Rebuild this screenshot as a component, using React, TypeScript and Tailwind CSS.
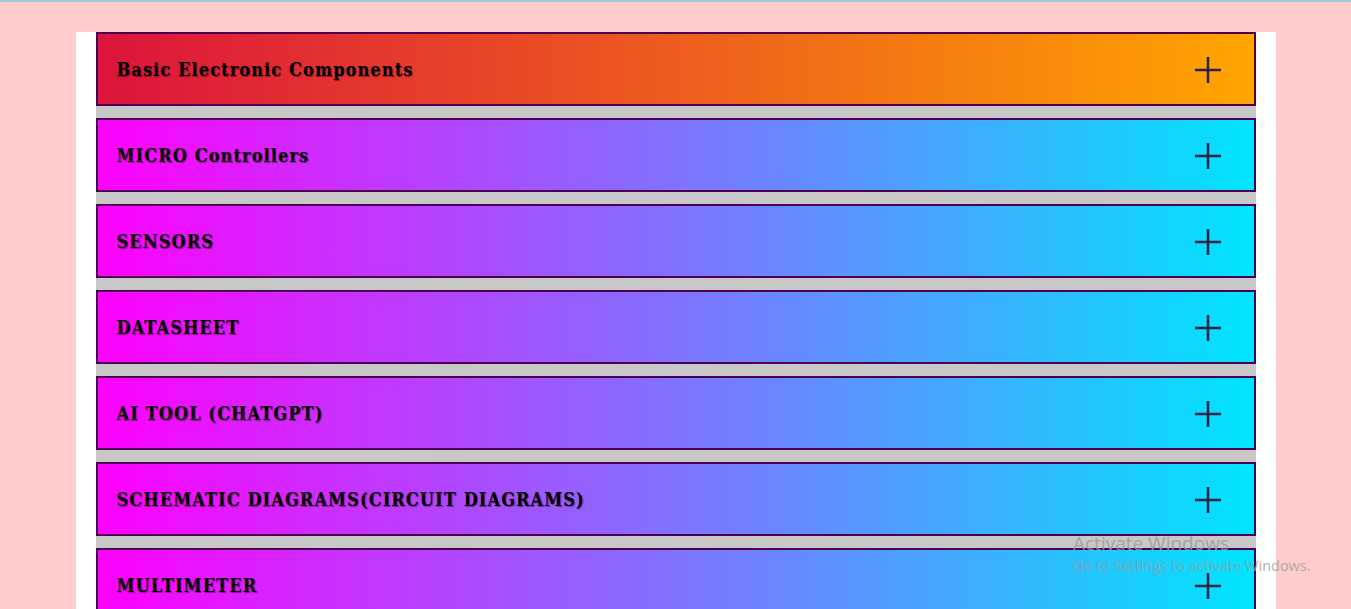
const topics = [
  "Basic Electronic Components",
  "MICRO Controllers",
  "SENSORS",
  "DATASHEET",
  "AI TOOL (CHATGPT)",
  "SCHEMATIC DIAGRAMS(CIRCUIT DIAGRAMS)",
  "MULTIMETER",
  "SOLDERING",
];

function Plus() {
  return (
    <svg width="28" height="28" viewBox="0 0 28 28" className="shrink-0">
      <path d="M14 1v26M1 14h26" stroke="#2a2145" strokeWidth="2.5" />
    </svg>
  );
}

export default function App() {
  return (
    <div className="relative min-h-screen bg-[#ffcccc] border-t-2 border-[#9ccfd8]">
      <div className="mx-auto mt-[30px] w-[1200px] bg-white px-5">
        <div className="flex flex-col gap-3 bg-[#c8c8c8]">
          {topics.map((t, i) => (
            <div
              key={t}
              className={
                "flex h-[74px] items-center justify-between border-2 border-[#4d0052] pt-[1px] pl-[19px] pr-[32px] " +
                (i === 0
                  ? "bg-[linear-gradient(to_right,#dc143c,#ffa500)]"
                  : "bg-[linear-gradient(to_right,#ff00ff,#00e5ff)]")
              }
            >
              <span className="font-['DejaVu_Serif_Condensed','DejaVu_Serif',serif] [font-stretch:condensed] text-[18px] font-bold tracking-[1.1px] text-black [text-shadow:1px_1px_1px_rgba(60,0,40,0.5)]">
                {t}
              </span>
              <Plus />
            </div>
          ))}
        </div>
      </div>
      <div className="pointer-events-none absolute left-[1073px] top-[528px] font-['Open_Sans',sans-serif] text-[#9a9a9a]/80">
        <p className="text-[19px] leading-[26px]">Activate Windows</p>
        <p className="text-[14.5px] leading-[20px]">Go to Settings to activate Windows.</p>
      </div>
    </div>
  );
}
